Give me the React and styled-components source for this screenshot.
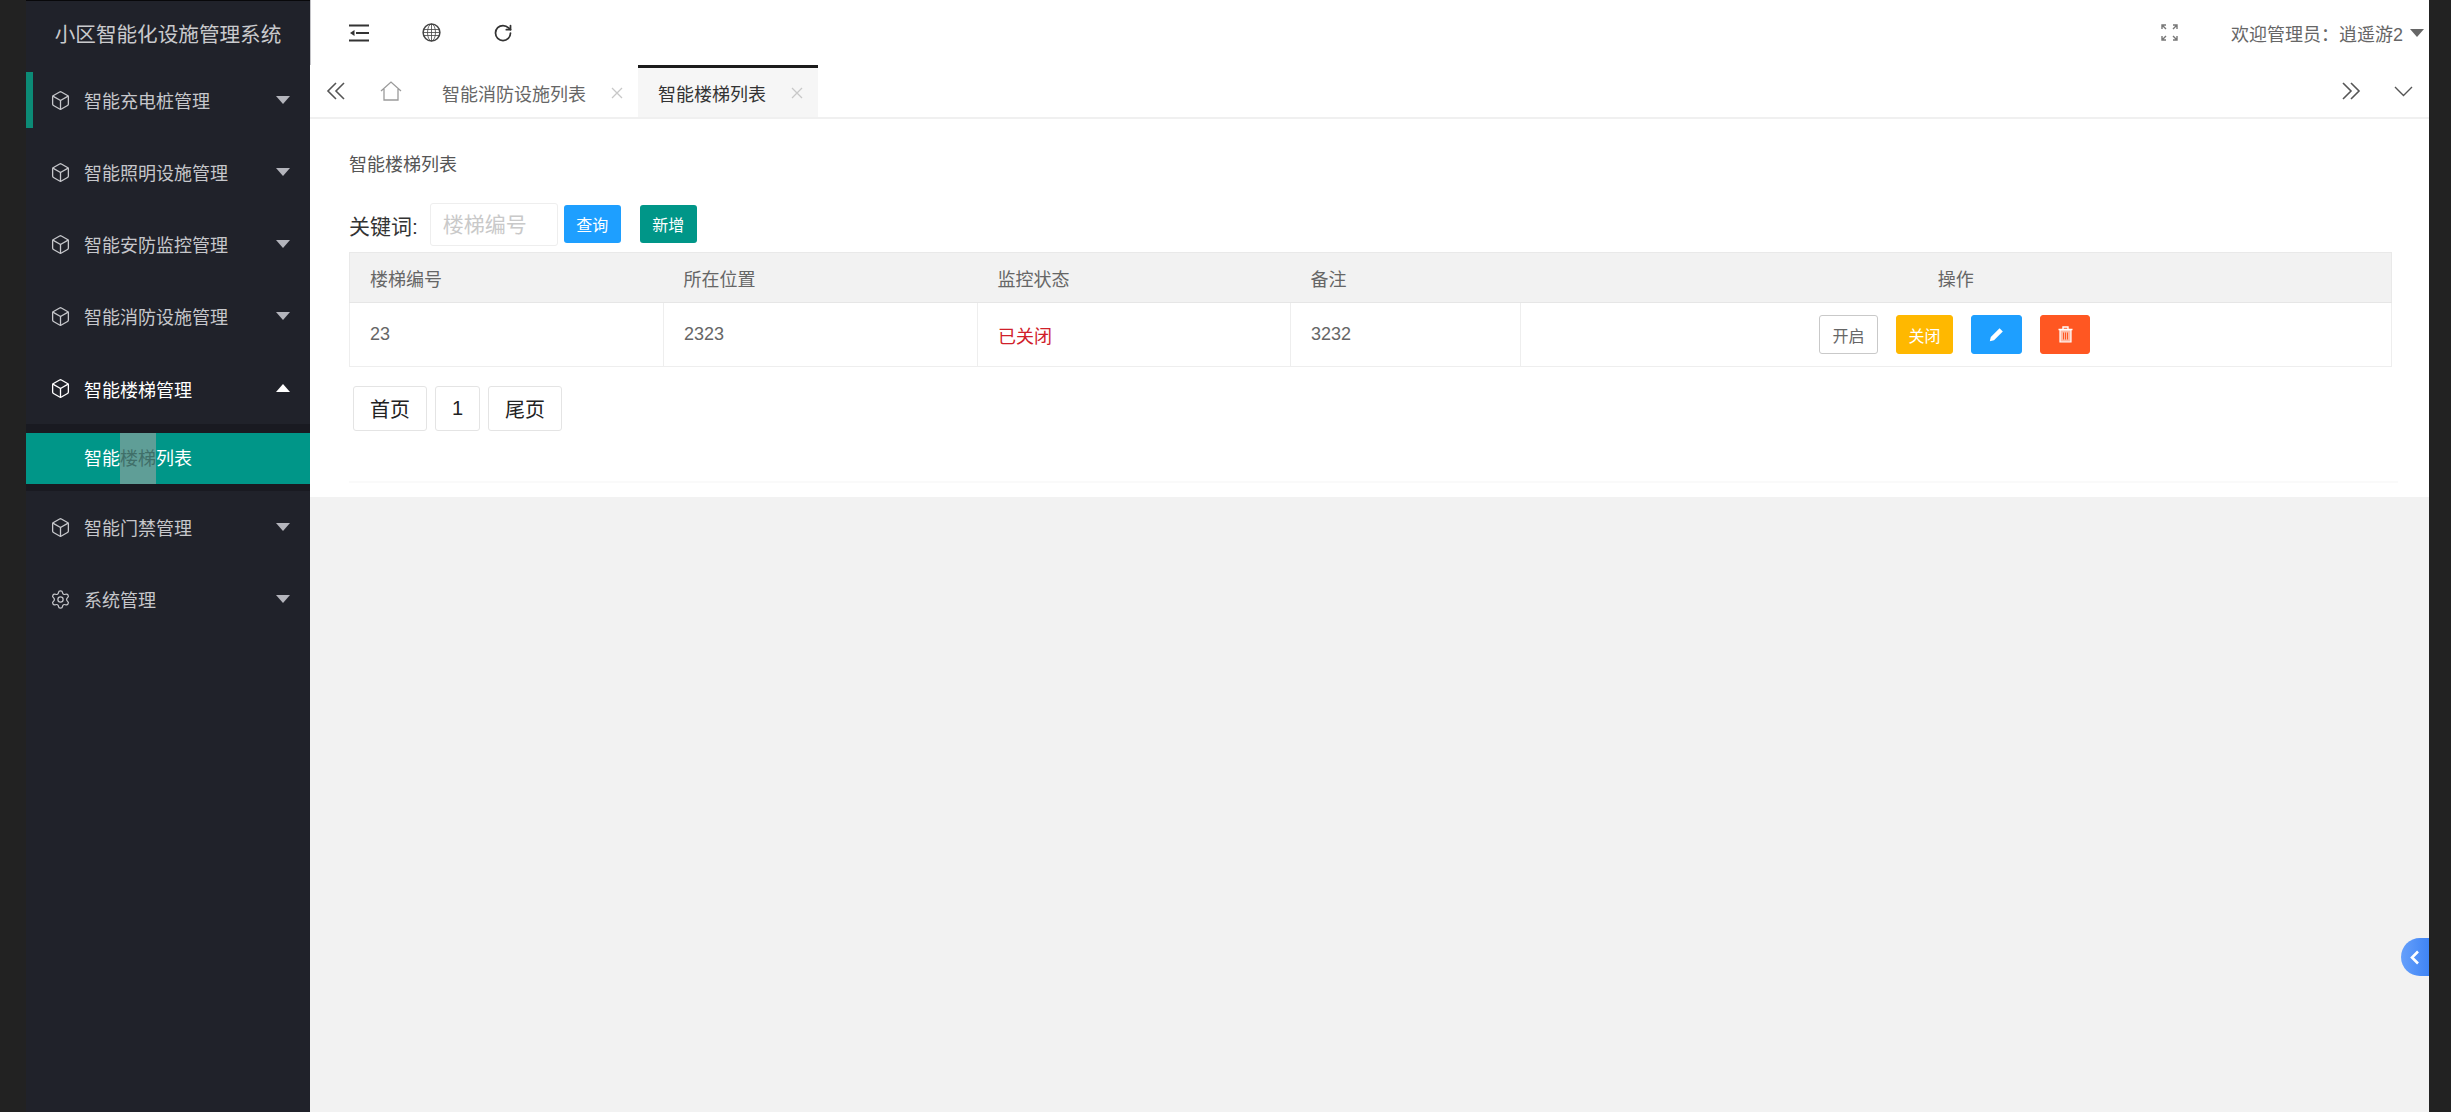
import styled, { createGlobalStyle } from "styled-components";
import { Box, RotateCw, Settings } from "lucide-react";

const GlobalStyle = createGlobalStyle`
  html, body {
    margin: 0;
    padding: 0;
    overflow: hidden;
    background: #222;
  }
  * {
    box-sizing: border-box;
  }
  body {
    font-family: "Liberation Sans", "Noto Sans CJK SC", sans-serif;
  }
`;

const Page = styled.div`
  position: relative;
  display: grid;
  grid-template-columns: 26px 284px 1fr 22px;
  width: 2451px;
  height: 1112px;
  overflow: hidden;
  background: #222;
`;

const EdgeStrip = styled.div`
  background: #222;
`;

const Sidebar = styled.aside`
  display: flex;
  flex-direction: column;
  background: #20222a;
  border-top: 1px solid #08080a;
`;

const Logo = styled.div`
  display: flex;
  align-items: center;
  justify-content: center;
  height: 63px;
  color: #c9cacd;
  font-size: 20.6px;
`;

const MenuItem = styled.div`
  position: relative;
  display: flex;
  align-items: center;
  gap: 13px;
  height: 72px;
  padding: 0 20px 0 24px;
  color: ${(props) => (props.$active ? "#fff" : "#c6c7cb")};
  font-size: 18px;

  &::before {
    content: "";
    display: ${(props) => (props.$marked ? "block" : "none")};
    position: absolute;
    left: 0;
    top: 8px;
    width: 7px;
    height: 56px;
    background: #0c8b76;
  }

  svg {
    flex: none;
  }
`;

const MenuLabel = styled.span`
  flex: 1;
  padding-top: ${(props) => (props.$active ? 2 : 0)}px;
`;

const Caret = styled.i`
  width: 0;
  height: 0;
  border-left: 7px solid transparent;
  border-right: 7px solid transparent;
  border-top: ${(props) => (props.$up ? "0" : `8px solid ${props.$color || "#b4b5bc"}`)};
  border-bottom: ${(props) => (props.$up ? `8px solid ${props.$color || "#fff"}` : "0")};
`;

const SubMenu = styled.div`
  padding: 9px 0 7px;
  background: #191a21;
`;

const SubItem = styled.div`
  display: flex;
  height: 51px;
  padding-left: 58px;
  background: #009688;
  color: #fff;
  font-size: 18px;
  line-height: 52px;
`;

const Selected = styled.span`
  background: #5f9e97;
  color: #3f6f69;
`;

const Main = styled.main`
  display: flex;
  flex-direction: column;
  background: #f2f2f2;
`;

const TopBar = styled.header`
  display: flex;
  align-items: center;
  height: 65px;
  padding: 0 5px 0 38px;
  background: #fff;
  border-left: 1px solid #c4c4c8;
  color: #333;
`;

const TopIcons = styled.div`
  display: flex;
  align-items: center;
  gap: 52px;
  flex: 1;
`;

const IconSlot = styled.span`
  display: flex;
  align-items: center;
  justify-content: center;
  width: 20px;
  height: 20px;
`;

const FullScreen = styled.span`
  display: flex;
  margin-right: 53px;
  color: #777;
`;

const Welcome = styled.div`
  display: flex;
  align-items: center;
  gap: 7px;
  color: #666;
  font-size: 18px;
`;

const TabBar = styled.nav`
  display: flex;
  align-items: stretch;
  height: 54px;
  background: #fff;
  border-bottom: 2px solid #f0f0f0;
  color: #666;
`;

const TabArrow = styled.span`
  display: flex;
  align-items: center;
  justify-content: center;
  width: ${(props) => props.$width}px;
`;

const HomeTab = styled.span`
  display: flex;
  align-items: center;
  justify-content: center;
  width: 58px;
  padding-left: 4px;
  color: #9b9b9b;
`;

const Tab = styled.div`
  display: flex;
  align-items: center;
  justify-content: space-between;
  width: ${(props) => props.$width}px;
  padding: 0 15px 0 ${(props) => (props.$active ? 20 : 24)}px;
  background: ${(props) => (props.$active ? "#f6f6f6" : "#fff")};
  border-top: 3px solid ${(props) => (props.$active ? "#1b1b1b" : "transparent")};
  color: ${(props) => (props.$active ? "#333" : "#666")};
  font-size: 18px;
`;

const TabSpacer = styled.div`
  flex: 1;
`;

const Card = styled.section`
  display: flex;
  flex-direction: column;
  height: 378px;
  padding: 34px 31px 0 39px;
  background: #fff;
`;

const CardTitle = styled.h2`
  margin: 0 0 26px;
  color: #555;
  font-size: 18px;
  font-weight: 400;
  line-height: 24px;
`;

const Filters = styled.div`
  display: flex;
  align-items: flex-start;
  height: 43px;
  margin-bottom: 6px;
`;

const FilterLabel = styled.label`
  margin-right: 12px;
  padding-top: 9px;
  color: #333;
  font-size: 21px;
  line-height: 30px;
`;

const KeywordInput = styled.input`
  width: 128px;
  height: 43px;
  margin-right: 6px;
  padding: 0 12px;
  border: 1px solid #eee;
  border-radius: 3px;
  outline: none;
  background: #fff;
  font-family: inherit;
  font-size: 21px;

  &::placeholder {
    color: #c9c9c9;
    opacity: 1;
  }
`;

const FilterButton = styled.button`
  width: 57px;
  height: 38px;
  margin: 2px 19px 0 0;
  padding: 0;
  border: 0;
  border-radius: 3px;
  background: ${(props) => props.$bg};
  color: #fff;
  font-family: inherit;
  font-size: 16px;
`;

const Table = styled.table`
  width: 2042px;
  table-layout: fixed;
  border-collapse: collapse;
  border: 1px solid #e9e9e9;
  font-size: 18px;
`;

const Th = styled.th`
  height: 50px;
  padding: 0 ${(props) => (props.$center ? 0 : 20)}px;
  background: #f2f2f2;
  border-bottom: 1px solid #e6e6e6;
  color: #666;
  font-weight: 400;
  text-align: ${(props) => (props.$center ? "center" : "left")};
`;

const Td = styled.td`
  height: 64px;
  padding: 0 20px;
  border: 1px solid #eee;
  color: ${(props) => props.$color || "#666"};
`;

const Actions = styled.div`
  display: flex;
  justify-content: center;
  gap: 18px;
  margin-left: -3px;
`;

const ActionButton = styled.button`
  display: flex;
  align-items: center;
  justify-content: center;
  width: ${(props) => props.$width}px;
  height: 39px;
  padding: 0;
  border: 1px solid ${(props) => props.$border || props.$bg};
  border-radius: 3px;
  background: ${(props) => props.$bg};
  color: ${(props) => props.$color || "#fff"};
  font-family: inherit;
  font-size: 16px;
`;

const Pager = styled.div`
  display: flex;
  gap: 8px;
  margin: 19px 0 50px 4px;
`;

const PageLink = styled.a`
  display: flex;
  align-items: center;
  justify-content: center;
  width: ${(props) => props.$width}px;
  height: 45px;
  border: 1px solid #e4e4e4;
  border-radius: 3px;
  background: #fff;
  color: #222;
  font-size: 20px;
`;

const CardFoot = styled.div`
  border-top: 2px solid #fafafa;
`;

const SideHandle = styled.div`
  position: absolute;
  right: 22px;
  top: 938px;
  display: flex;
  align-items: center;
  justify-content: center;
  width: 28px;
  height: 38px;
  border-radius: 19px 0 0 19px;
  background: linear-gradient(90deg, #66a0fb, #3f84f5);
`;

const CubeIcon = () => <Box size={21} strokeWidth={1.5} />;

const ShrinkIcon = () => (
  <svg width="20" height="18" viewBox="0 0 20 18">
    <path d="M0 1.5h20M7 9h13M0 16.5h20" stroke="#333" strokeWidth="2.2" fill="none" />
    <path d="M1 9l4.5-3v6z" fill="#333" />
  </svg>
);

const GlobeIcon = () => (
  <svg width="19" height="19" viewBox="0 0 19 19" fill="none" stroke="#444" strokeWidth="0.8">
    <circle cx="9.5" cy="9.5" r="8.4" strokeWidth="1.5" />
    <ellipse cx="9.5" cy="9.5" rx="4" ry="8.4" />
    <path d="M9.5 1v17M1.5 6.5h16M1 9.5h17M1.5 12.5h16" />
  </svg>
);

const ExpandIcon = () => (
  <svg width="17" height="17" viewBox="0 0 17 17" fill="none" stroke="currentColor" strokeWidth="1.4">
    <path d="M1 5V1h4M1 1l4 4M12 1h4v4M16 1l-4 4M1 12v4h4M1 16l4-4M16 12v4h-4M16 16l-4-4" />
  </svg>
);

const HomeIcon = () => (
  <svg width="22" height="20" viewBox="0 0 22 20" fill="none" stroke="currentColor" strokeWidth="1.3">
    <path d="M1 10L11 1l10 9M4 8v11h14V8" />
  </svg>
);

const DoubleChevron = ({ flip }) => (
  <svg width="19" height="18" viewBox="0 0 19 18" fill="none" stroke="#555" strokeWidth="1.6">
    <path d={flip ? "M1 1l8 8-8 8M9 1l8 8-8 8" : "M10 1L2 9l8 8M18 1l-8 8 8 8"} />
  </svg>
);

const ChevronDown = () => (
  <svg width="19" height="11" viewBox="0 0 19 11" fill="none" stroke="#555" strokeWidth="1.4">
    <path d="M1 1l8.5 8.5L18 1" />
  </svg>
);

const CloseIcon = () => (
  <svg width="12" height="12" viewBox="0 0 12 12" stroke="#c8c8c8" strokeWidth="1.3">
    <path d="M1 1l10 10M11 1L1 11" />
  </svg>
);

const PencilIcon = () => (
  <svg width="15" height="15" viewBox="0 0 15 15" fill="#fff">
    <path d="M10.6 1.2l3.2 3.2L5 13.2 .8 14.2l1-4.2z" />
  </svg>
);

const TrashIcon = () => (
  <svg width="15" height="17" viewBox="0 0 15 17" fill="none" stroke="#fff">
    <path d="M.5 3.5h14M5 3V1h5v2" strokeWidth="1.4" />
    <path d="M2 4h11v12H2z" fill="#ffb9a4" stroke="#fff" strokeWidth="1.2" />
    <path d="M5.5 6.5v7M7.5 6.5v7M9.5 6.5v7" strokeWidth="1" stroke="#ff5722" />
  </svg>
);

const SmallChevron = () => (
  <svg width="10" height="15" viewBox="0 0 10 15" fill="none" stroke="#fff" strokeWidth="2.6">
    <path d="M8 1.5L2 7.5l6 6" />
  </svg>
);

const menus = [
  { label: "智能充电桩管理", marked: true },
  { label: "智能照明设施管理" },
  { label: "智能安防监控管理" },
  { label: "智能消防设施管理" },
];

const App = () => {
  return (
    <>
      <GlobalStyle />
      <Page>
        <EdgeStrip />
        <Sidebar>
          <Logo>小区智能化设施管理系统</Logo>
          {menus.map((menu) => (
            <MenuItem key={menu.label} $marked={menu.marked}>
              <CubeIcon />
              <MenuLabel>{menu.label}</MenuLabel>
              <Caret />
            </MenuItem>
          ))}
          <MenuItem $active>
            <CubeIcon />
            <MenuLabel $active>智能楼梯管理</MenuLabel>
            <Caret $up />
          </MenuItem>
          <SubMenu>
            <SubItem>
              智能<Selected>楼梯</Selected>列表
            </SubItem>
          </SubMenu>
          <MenuItem>
            <CubeIcon />
            <MenuLabel>智能门禁管理</MenuLabel>
            <Caret />
          </MenuItem>
          <MenuItem>
            <Settings size={21} strokeWidth={1.4} />
            <MenuLabel>系统管理</MenuLabel>
            <Caret />
          </MenuItem>
        </Sidebar>

        <Main>
          <TopBar>
            <TopIcons>
              <IconSlot>
                <ShrinkIcon />
              </IconSlot>
              <IconSlot>
                <GlobeIcon />
              </IconSlot>
              <IconSlot>
                <RotateCw size={24} strokeWidth={2.1} />
              </IconSlot>
            </TopIcons>
            <FullScreen>
              <ExpandIcon />
            </FullScreen>
            <Welcome>
              欢迎管理员：逍遥游2
              <Caret $color="#666" />
            </Welcome>
          </TopBar>

          <TabBar>
            <TabArrow $width={50}>
              <DoubleChevron />
            </TabArrow>
            <HomeTab>
              <HomeIcon />
            </HomeTab>
            <Tab $width={220}>
              智能消防设施列表
              <CloseIcon />
            </Tab>
            <Tab $active $width={180}>
              智能楼梯列表
              <CloseIcon />
            </Tab>
            <TabSpacer />
            <TabArrow $width={52}>
              <DoubleChevron flip />
            </TabArrow>
            <TabArrow $width={52}>
              <ChevronDown />
            </TabArrow>
          </TabBar>

          <Card>
            <CardTitle>智能楼梯列表</CardTitle>
            <Filters>
              <FilterLabel>关键词:</FilterLabel>
              <KeywordInput placeholder="楼梯编号" />
              <FilterButton $bg="#1e9fff">查询</FilterButton>
              <FilterButton $bg="#009688">新增</FilterButton>
            </Filters>
            <Table>
              <colgroup>
                <col width="314" />
                <col width="314" />
                <col width="313" />
                <col width="230" />
                <col width="871" />
              </colgroup>
              <thead>
                <tr>
                  <Th>楼梯编号</Th>
                  <Th>所在位置</Th>
                  <Th>监控状态</Th>
                  <Th>备注</Th>
                  <Th $center>操作</Th>
                </tr>
              </thead>
              <tbody>
                <tr>
                  <Td>23</Td>
                  <Td>2323</Td>
                  <Td $color="#d0202a">已关闭</Td>
                  <Td>3232</Td>
                  <Td>
                    <Actions>
                      <ActionButton $width={59} $bg="#fff" $border="#c9c9c9" $color="#666">
                        开启
                      </ActionButton>
                      <ActionButton $width={57} $bg="#ffb800">
                        关闭
                      </ActionButton>
                      <ActionButton $width={51} $bg="#1e9fff">
                        <PencilIcon />
                      </ActionButton>
                      <ActionButton $width={50} $bg="#ff5722">
                        <TrashIcon />
                      </ActionButton>
                    </Actions>
                  </Td>
                </tr>
              </tbody>
            </Table>
            <Pager>
              <PageLink $width={74}>首页</PageLink>
              <PageLink $width={45}>1</PageLink>
              <PageLink $width={74}>尾页</PageLink>
            </Pager>
            <CardFoot />
          </Card>
        </Main>
        <EdgeStrip />

        <SideHandle>
          <SmallChevron />
        </SideHandle>
      </Page>
    </>
  );
};

export default App;
